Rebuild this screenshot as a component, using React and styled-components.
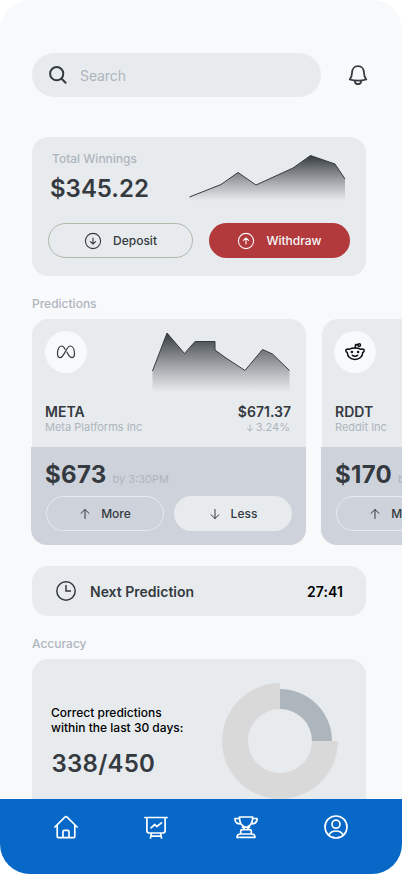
import React from "react";
import styled, { createGlobalStyle } from "styled-components";

const c = {
  page: "#f8f9fb",
  card: "#e8ebee",
  panel: "#ced2da",
  muted: "#adb5bd",
  ink: "#343a40",
  blue: "#0868c7",
  red: "#b23a3c",
};

const GlobalStyle = createGlobalStyle`
  * { box-sizing: border-box; }
  body { margin: 0; background: #fff; font-family: Inter, sans-serif; color: ${c.ink}; }
  button { font: inherit; color: inherit; margin: 0; padding: 0; border: 0; background: none; }
  svg { display: block; flex: none; }
`;

const Screen = styled.div`
  display: flex;
  flex-direction: column;
  width: 402px;
  height: 874px;
  overflow: hidden;
  border-radius: 30px;
  background: ${c.page};
`;

const Content = styled.main`
  flex: 1;
  min-height: 0;
  overflow: hidden;
  padding: 53px 0 0 32px;
`;

const TopBar = styled.header`
  display: flex;
  align-items: center;
  gap: 25px;
`;

const SearchBox = styled.div`
  display: flex;
  align-items: center;
  gap: 10px;
  width: 289px;
  height: 44px;
  padding: 1px 0 0 15px;
  border-radius: 22px;
  background: ${c.card};
  color: ${c.muted};
  font-size: 14px;
  letter-spacing: -0.1px;
`;

const Card = styled.section`
  width: 334px;
  border-radius: 16px;
  background: ${c.card};
`;

const WinningsCard = styled(Card)`
  height: 139px;
  margin-top: 40px;
  padding: 14px 16px 0;
`;

const WinningsTop = styled.div`
  display: flex;
  justify-content: space-between;
  height: 72px;
  padding-right: 4px;
`;

const WinningsText = styled.div`
  padding-left: 2px;
`;

const Caption = styled.div`
  padding-left: 2px;
  color: ${c.muted};
  font-size: 12px;
  font-weight: 500;
  line-height: 16px;
`;

const Amount = styled.div`
  margin: ${(p) => p.$top || 0}px 0 0 ${(p) => p.$left || 0}px;
  font-size: 24px;
  font-weight: ${(p) => p.$weight || 600};
  letter-spacing: ${(p) => p.$tracking || 0}px;
  line-height: 30px;
`;

const ButtonRow = styled.div`
  display: flex;
  gap: ${(p) => p.$gap}px;
`;

const tones = {
  outline: `border: 1px solid #adb9a8;`,
  danger: `background: ${c.red}; color: ${c.page};`,
  light: `border: 1px solid ${c.card};`,
  filled: `background: ${c.card};`,
};

const Pill = styled.button`
  && {
    display: flex;
    align-items: center;
    justify-content: center;
    gap: ${(p) => p.$gap || 11}px;
    width: ${(p) => p.$width}px;
    height: 35px;
    flex: none;
    border-radius: 18px;
    font-size: 12px;
    font-weight: 500;
    ${(p) => tones[p.$tone]}
  }
`;

const SectionTitle = styled.h2`
  margin: ${(p) => p.$top}px 0 7px;
  color: ${c.muted};
  font-size: 12px;
  font-weight: 500;
  line-height: 16px;
`;

const Carousel = styled.div`
  display: flex;
  gap: 16px;
  overflow: hidden;
  margin-left: -1px;
  padding-left: 1px;
`;

const Stock = styled.article`
  flex: none;
  width: 274px;
`;

const StockTop = styled.div`
  display: flex;
  flex-direction: column;
  justify-content: space-between;
  height: 128px;
  padding: 12px 16px 13px 13px;
  border-radius: 16px 16px 0 0;
  background: ${c.card};
`;

const StockHead = styled.div`
  display: flex;
  justify-content: space-between;
  height: 62px;
  margin-left: ${(p) => p.$shift || 0}px;
`;

const Logo = styled.div`
  display: grid;
  place-items: center;
  width: 42px;
  height: 42px;
  border-radius: 50%;
  background: ${c.page};
`;

const StockMeta = styled.div`
  display: flex;
  justify-content: space-between;
`;

const MetaColumn = styled.div`
  display: flex;
  flex-direction: column;
  align-items: ${(p) => (p.$end ? "flex-end" : "flex-start")};
`;

const Ticker = styled.div`
  margin-right: ${(p) => p.$right || 0}px;
  font-size: 14px;
  font-weight: 600;
  line-height: 18px;
`;

const Small = styled.div`
  display: flex;
  align-items: center;
  gap: 2px;
  color: ${c.muted};
  font-size: 11px;
  line-height: 13px;
`;

const StockBottom = styled.div`
  height: 98px;
  margin-left: -1px;
  padding: 13px 0 0 15px;
  border-radius: 0 0 16px 16px;
  background: ${c.panel};
`;

const Target = styled.div`
  display: flex;
  align-items: baseline;
  gap: 6px;
  height: 36px;
  margin-left: -1px;
`;

const NextCard = styled(Card)`
  display: flex;
  align-items: center;
  height: 50px;
  margin-top: 21px;
  padding: 0 23px 0 24px;
  font-size: 14px;
  font-weight: 600;
`;

const NextLabel = styled.span`
  flex: 1;
  padding: 1px 0 0 14px;
`;

const Countdown = styled.span`
  padding-top: 1px;
  color: #000;
  letter-spacing: 0.1px;
`;

const AccuracyCard = styled(Card)`
  display: flex;
  justify-content: space-between;
  height: 170px;
  padding: 24px 28px 0 19px;
`;

const AccuracyText = styled.div`
  padding-top: 22px;
`;

const Statement = styled.p`
  margin: 0;
  color: #000;
  font-size: 12px;
  font-weight: 500;
  line-height: 15px;
`;

const TabBar = styled.nav`
  display: flex;
  justify-content: space-between;
  align-items: flex-start;
  height: 75px;
  flex: none;
  padding: 16px 54px 0;
  background: ${c.blue};
  color: #fff;
`;

const SearchIcon = () => (
  <svg width="23" height="23" viewBox="0 0 23 23" fill="none" stroke={c.ink} strokeWidth="2" strokeLinecap="round">
    <circle cx="9.7" cy="9.7" r="6.6" />
    <path d="m14.600 14.800 4 4" />
  </svg>
);

const BellIcon = () => (
  <svg width="24" height="24" viewBox="0 0 24 24" fill="none" stroke={c.ink} strokeWidth="1.8" strokeLinejoin="round" strokeLinecap="round">
    <path d="M12 3.200C8.300 3.200 6.200 6 6.100 9.200 6 13 5.500 14.300 3.700 16.500Q12 18.800 20.300 16.500C18.500 14.300 18 13 17.900 9.200 17.800 6 15.700 3.200 12 3.200Z" />
    <path d="M8.800 18.200c.4 1.900 1.500 3 3.200 3s2.800-1.100 3.200-3" />
  </svg>
);

const Arrow = ({ up, size = 12, width = 1, stroke = "currentColor" }) => (
  <svg width={size} height={size} viewBox="0 0 12 12" fill="none" stroke={stroke} strokeWidth={width} strokeLinecap="round" strokeLinejoin="round">
    <path d={up ? "M6 10.500V1.500M2 5.300 6 1.500l4 3.800" : "M6 1.500v9M2 6.700 6 10.500l4-3.800"} />
  </svg>
);

const CircleArrow = ({ up }) => (
  <svg width="18" height="18" viewBox="0 0 18 18" fill="none" stroke="currentColor" strokeWidth="1.1" strokeLinecap="round" strokeLinejoin="round">
    <circle cx="9" cy="9" r="7.600" />
    <path d={up ? "M9 12V6M6.400 8.400 9 6l2.600 2.400" : "M9 6v6M6.400 9.600 9 12l2.600-2.400"} />
  </svg>
);

const MetaIcon = () => (
  <svg width="20" height="16" viewBox="0 0 20 16" fill="none" stroke={c.ink} strokeWidth="1.200" strokeLinecap="round" strokeLinejoin="round">
    <path d="M9 5.200C8.200 3.200 7.200 2 5.500 2 3 2 1.500 5.600 1.500 9.500c0 2.600.9 4.100 2.700 4.100 2.300 0 3.600-3.200 5.300-6.300C11.100 4.300 12.300 2 14.300 2c2.700 0 4.200 3.600 4.200 7.500 0 2.600-.9 4.100-2.700 4.100-2.200 0-3.500-2.500-4.900-5.500" />
  </svg>
);

const RedditIcon = () => (
  <svg width="22" height="22" viewBox="0 0 22 22" fill="none" stroke="#080a0c" strokeWidth="1.500" strokeLinecap="round" strokeLinejoin="round">
    <path d="M5 8.300C6.800 7.400 8.700 7 11 7s4.200.4 6 1.300c1.600-.7 3.200 0 3.200 1.200 0 1-.6 1.700-1.500 1.900 0 4.200-3.300 7-7.700 7s-7.700-2.800-7.700-7c-.9-.2-1.500-.9-1.500-1.900 0-1.200 1.600-1.900 3.200-1.200Z" />
    <path d="M11.200 6.800 11.600 3.600l2.200.2M8.400 14.300q2.600 1.900 5.200 0" />
    <circle cx="15.200" cy="4.100" r="1.300" />
    <circle cx="7.900" cy="11.100" r=".5" fill="#080a0c" />
    <circle cx="14.100" cy="11.100" r=".5" fill="#080a0c" />
  </svg>
);

const ClockIcon = () => (
  <svg width="20" height="20" viewBox="0 0 20 20" fill="none" stroke={c.ink} strokeWidth="1.500">
    <circle cx="10" cy="10" r="9.200" />
    <path d="M10 4v6h5" />
  </svg>
);

const TabIcon = ({ children }) => (
  <svg width="24" height="24" viewBox="0 0 24 24" fill="none" stroke="currentColor" strokeWidth="1.700" strokeLinecap="round" strokeLinejoin="round">
    {children}
  </svg>
);

const AreaChart = ({ id, width, height, line }) => (
  <svg width={width} height={height} viewBox={`0 0 ${width} ${height}`} fill="none">
    <defs>
      <linearGradient id={id} x1="0" y1="0" x2="0" y2="1">
        <stop offset="0" stopColor={c.ink} />
        <stop offset="1" stopColor="#55565a" stopOpacity="0" />
      </linearGradient>
    </defs>
    <path d={`M${line}V${height}H.5Z`} fill={`url(#${id})`} />
    <path d={`M${line}`} stroke={c.ink} />
  </svg>
);

const Donut = () => (
  <svg width="116" height="116" viewBox="0 0 116 116">
    <path d="M58 0A58 58 0 1 0 116 58H90A32 32 0 1 1 58 26Z" fill="#d9d9d9" />
    <path d="M58 6A52 52 0 0 1 110 58H90A32 32 0 0 0 58 26Z" fill="#adb5bd" />
  </svg>
);

const StockCard = ({ ticker, name, price, change, target, logo, logoShift, chart }) => (
  <Stock>
    <StockTop>
      <StockHead $shift={logoShift}>
        <Logo>{logo}</Logo>
        {chart}
      </StockHead>
      <StockMeta>
        <MetaColumn>
          <Ticker>{ticker}</Ticker>
          <Small>{name}</Small>
        </MetaColumn>
        {price && (
          <MetaColumn $end>
            <Ticker $right={-1}>{price}</Ticker>
            <Small>
              <Arrow size={8} width={1.500} />
              {change}
            </Small>
          </MetaColumn>
        )}
      </StockMeta>
    </StockTop>
    <StockBottom>
      <Target>
        <Amount $weight={700} $tracking={0.3}>{target}</Amount>
        <Small>by 3:30PM</Small>
      </Target>
      <ButtonRow $gap={10}>
        <Pill $tone="light" $width={118} $gap={10}>
          <Arrow up />
          More
        </Pill>
        <Pill $tone="filled" $width={118} $gap={10}>
          <Arrow />
          Less
        </Pill>
      </ButtonRow>
    </StockBottom>
  </Stock>
);

export default function App() {
  return (
    <>
      <GlobalStyle />
      <Screen>
        <Content>
          <TopBar>
            <SearchBox>
              <SearchIcon />
              Search
            </SearchBox>
            <BellIcon />
          </TopBar>

          <WinningsCard>
            <WinningsTop>
              <WinningsText>
                <Caption>Total Winnings</Caption>
                <Amount $top={7}>$345.22</Amount>
              </WinningsText>
              <AreaChart id="winnings" width={157} height={50} line=".5 46 32 33.500 49 21.500 67 34 104 17 121.500 4.500 146 13 156 28" />
            </WinningsTop>
            <ButtonRow $gap={16}>
              <Pill $tone="outline" $width={145}>
                <CircleArrow />
                Deposit
              </Pill>
              <Pill $tone="danger" $width={141}>
                <CircleArrow up />
                Withdraw
              </Pill>
            </ButtonRow>
          </WinningsCard>

          <SectionTitle $top={20}>Predictions</SectionTitle>
          <Carousel>
            <StockCard
              ticker="META"
              name="Meta Platforms Inc"
              price="$671.37"
              change="3.24%"
              target="$673"
              logo={<MetaIcon />}
              chart={<AreaChart id="meta" width={138} height={61} line=".5 40 15 2 32.500 22.500 43 10.500H63V19L74 27 93 39.500 110.500 18.500 120.500 23 137.500 39.500" />}
            />
            <StockCard ticker="RDDT" name="Reddit Inc" target="$170" logo={<RedditIcon />} logoShift={-1} />
          </Carousel>

          <NextCard>
            <ClockIcon />
            <NextLabel>Next Prediction</NextLabel>
            <Countdown>27:41</Countdown>
          </NextCard>

          <SectionTitle $top={20}>Accuracy</SectionTitle>
          <AccuracyCard>
            <AccuracyText>
              <Statement>
                Correct predictions
                <br />
                within the last 30 days:
              </Statement>
              <Amount $top={14} $left={0.5} $tracking={0.25}>338/450</Amount>
            </AccuracyText>
            <Donut />
          </AccuracyCard>
        </Content>

        <TabBar>
          <TabIcon>
            <path d="m.9 12 9.700-9.700q1.400-1.300 2.800 0l9.700 9.700M3.200 10v11.500q0 1.200 1.200 1.200h15.200q1.200 0 1.200-1.200V10M9 22.500v-6q0-1.200 1.200-1.200h3.600q1.200 0 1.200 1.200v6" />
          </TabIcon>
          <TabIcon>
            <path d="M.9 2.500h22.200M2.900 2.500v13.300q0 2.200 2.200 2.200h13.800q2.200 0 2.200-2.200V2.500M7.500 18l-1 5M16.500 18l1 5M7 21.200h10M7 12.800 10.800 9.500l2 2L17.500 7.800" />
          </TabIcon>
          <TabIcon>
            <path d="M5.500 2h13.200c0 4.500-1.500 8-4.700 9.500v3.200h-4v-3.200C6.900 10 5.400 6.500 5.500 2ZM5.500 3.500H.9c0 3.500 2 5.500 5.800 5.500M18.600 3.500h4.500c0 3.500-2 5.500-5.800 5.500M10 14.700H8.200q-1.500 0-1.500 1.500v2.800h10.600v-2.800q0-1.500-1.500-1.500H14M6.700 19Q3 19 3 22.300h18Q21 19 17.300 19M8.500 12.200h7" />
          </TabIcon>
          <TabIcon>
            <circle cx="12" cy="12" r="11" />
            <circle cx="12" cy="9.200" r="4" />
            <path d="M4.700 20c1.500-2.600 4.200-4 7.300-4s5.800 1.400 7.300 4" />
          </TabIcon>
        </TabBar>
      </Screen>
    </>
  );
}
